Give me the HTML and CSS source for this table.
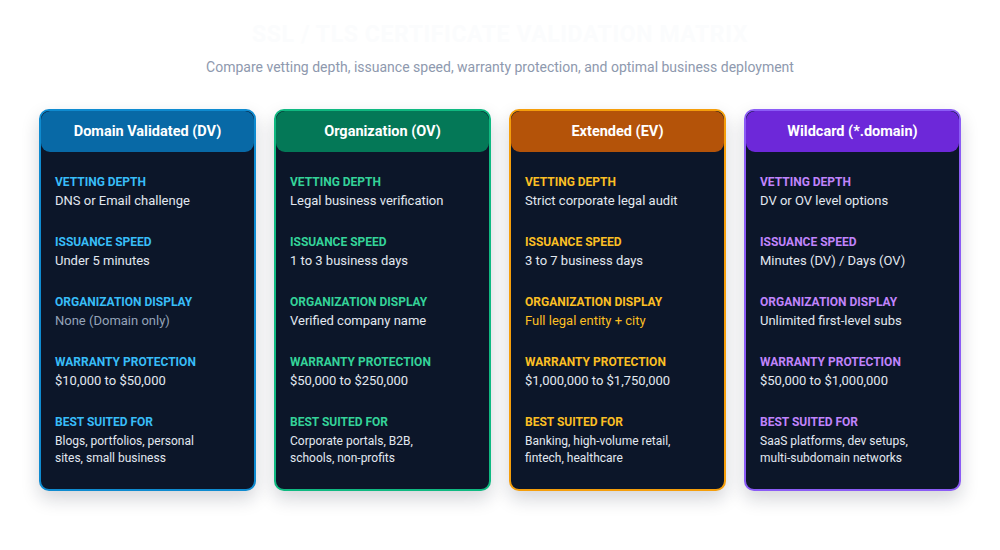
FILE: index.html
```html
<!DOCTYPE html>
<html lang="en">
<head>
<meta charset="utf-8">
<title>SSL / TLS Certificate Validation Matrix</title>
<link rel="stylesheet" href="styles.css">
</head>
<body>
<main class="page">
  <header class="intro">
    <h1 class="title">SSL / TLS Certificate Validation Matrix</h1>
    <p class="subtitle">Compare vetting depth, issuance speed, warranty protection, and optimal business deployment</p>
  </header>
  <section class="cards">
    <article class="card dv">
      <h2 class="card-head">Domain Validated (DV)</h2>
      <div class="card-body">
        <div class="item"><div class="label">Vetting Depth</div><div class="value">DNS or Email challenge</div></div>
        <div class="item"><div class="label">Issuance Speed</div><div class="value">Under 5 minutes</div></div>
        <div class="item"><div class="label">Organization Display</div><div class="value muted">None (Domain only)</div></div>
        <div class="item"><div class="label">Warranty Protection</div><div class="value">$10,000 to $50,000</div></div>
        <div class="item"><div class="label">Best Suited For</div><div class="value small">Blogs, portfolios, personal sites, small business</div></div>
      </div>
    </article>
    <article class="card ov">
      <h2 class="card-head">Organization (OV)</h2>
      <div class="card-body">
        <div class="item"><div class="label">Vetting Depth</div><div class="value">Legal business verification</div></div>
        <div class="item"><div class="label">Issuance Speed</div><div class="value">1 to 3 business days</div></div>
        <div class="item"><div class="label">Organization Display</div><div class="value">Verified company name</div></div>
        <div class="item"><div class="label">Warranty Protection</div><div class="value">$50,000 to $250,000</div></div>
        <div class="item"><div class="label">Best Suited For</div><div class="value small">Corporate portals, B2B, schools, non-profits</div></div>
      </div>
    </article>
    <article class="card ev">
      <h2 class="card-head">Extended (EV)</h2>
      <div class="card-body">
        <div class="item"><div class="label">Vetting Depth</div><div class="value">Strict corporate legal audit</div></div>
        <div class="item"><div class="label">Issuance Speed</div><div class="value">3 to 7 business days</div></div>
        <div class="item"><div class="label">Organization Display</div><div class="value accent">Full legal entity + city</div></div>
        <div class="item"><div class="label">Warranty Protection</div><div class="value">$1,000,000 to $1,750,000</div></div>
        <div class="item"><div class="label">Best Suited For</div><div class="value small">Banking, high-volume retail, fintech, healthcare</div></div>
      </div>
    </article>
    <article class="card wc">
      <h2 class="card-head">Wildcard (*.domain)</h2>
      <div class="card-body">
        <div class="item"><div class="label">Vetting Depth</div><div class="value">DV or OV level options</div></div>
        <div class="item"><div class="label">Issuance Speed</div><div class="value">Minutes (DV) / Days (OV)</div></div>
        <div class="item"><div class="label">Organization Display</div><div class="value">Unlimited first-level subs</div></div>
        <div class="item"><div class="label">Warranty Protection</div><div class="value">$50,000 to $1,000,000</div></div>
        <div class="item"><div class="label">Best Suited For</div><div class="value small">SaaS platforms, dev setups, multi-subdomain networks</div></div>
      </div>
    </article>
  </section>
</main>
</body>
</html>
```

FILE: styles.css
```css
* { box-sizing: border-box; margin: 0; padding: 0; }

html, body {
  background: #ffffff;
  font-family: Roboto, "Liberation Sans", Arial, sans-serif;
}

.page {
  width: 1000px;
  height: 550px;
  padding-top: 21px;
}

.intro {
  text-align: center;
}

.title {
  font-size: 23px;
  line-height: 28px;
  font-weight: 700;
  text-transform: uppercase;
  letter-spacing: 0.6px;
  color: #fbfcfd;
}

.subtitle {
  margin-top: 9px;
  font-size: 14px;
  line-height: 18px;
  color: #8e99ae;
}

.cards {
  width: 922px;
  margin: 33px auto 0;
  display: grid;
  grid-template-columns: repeat(4, 217px);
  gap: 18px;
}

.card {
  border: 2px solid;
  border-radius: 10px;
  background: #0c1629;
  overflow: hidden;
  box-shadow: 0 8px 18px rgba(15, 23, 42, 0.18);
}

.card-head {
  height: 41px;
  border-radius: 9px;
  display: flex;
  align-items: center;
  justify-content: center;
  font-size: 14.5px;
  font-weight: 700;
  color: #ffffff;
}

.card-body {
  padding: 22px 14px 22px;
  display: flex;
  flex-direction: column;
  gap: 24px;
}

.label {
  font-size: 12px;
  line-height: 16px;
  font-weight: 700;
  text-transform: uppercase;
}

.value {
  margin-top: 2px;
  font-size: 13px;
  line-height: 18px;
  color: #e2e8f0;
}

.value.small {
  max-width: 160px;
  font-size: 12px;
  line-height: 17px;
  margin-top: 3px;
}

.value.muted { color: #94a3b8; }

.dv { border-color: #0f8bd0; }
.dv .card-head { background: #0869a6; }
.dv .label { color: #38bdf8; }

.ov { border-color: #10b981; }
.ov .card-head { background: #047857; }
.ov .label { color: #34d399; }

.ev { border-color: #f59e0b; }
.ev .card-head { background: #b45309; }
.ev .label { color: #fbbf24; }
.ev .value.accent { color: #fbbf24; }

.wc { border-color: #8b5cf6; }
.wc .card-head { background: #6d28d9; }
.wc .label { color: #c084fc; }
```
